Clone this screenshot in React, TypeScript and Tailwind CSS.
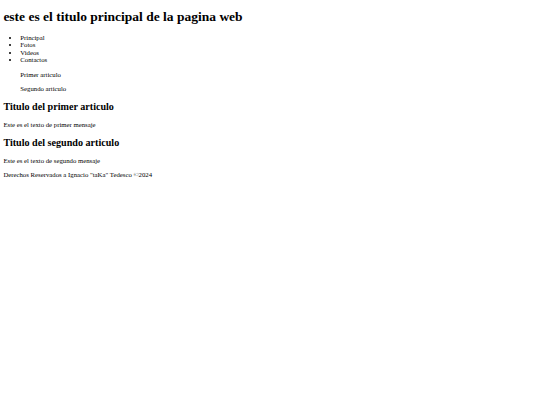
export default function App() {
  return (
    <div className="[zoom:0.421875]">
      <div className="m-2 font-['Liberation_Serif','Times_New_Roman',serif] text-[16px] leading-[18px] text-black">
        <header>
          <h1 className="my-[21.44px] text-[32px] leading-[37px] font-bold">este es el titulo principal de la pagina web</h1>
          <nav>
            <ul className="my-4 list-disc pl-10">
              <li>Principal</li>
              <li>Fotos</li>
              <li>Videos</li>
              <li>Contactos</li>
            </ul>
          </nav>
        </header>

        <aside className="pl-10">
          <p className="my-4">Primer articulo</p>
          <p className="my-4">Segundo articulo</p>
        </aside>

        <main>
          <article>
            <h2 className="my-[19.92px] text-[24px] leading-[27px] font-bold">Titulo del primer articulo</h2>
            <p className="my-4">Este es el texto de primer mensaje</p>
          </article>
          <article>
            <h2 className="my-[19.92px] text-[24px] leading-[27px] font-bold">Titulo del segundo articulo</h2>
            <p className="my-4">Este es el texto de segundo mensaje</p>
          </article>
        </main>

        <footer>
          <p className="my-4">Derechos Reservados a Ignacio "taKa" Tedesco ©2024</p>
        </footer>
      </div>
    </div>
  );
}
